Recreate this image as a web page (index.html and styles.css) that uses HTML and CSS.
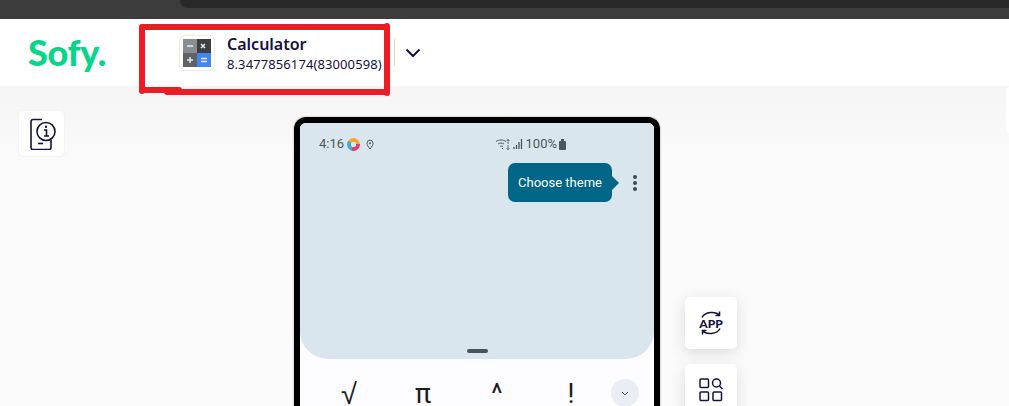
FILE: index.html
```html
<!DOCTYPE html>
<html lang="en">
<head>
  <meta charset="UTF-8">
  <title>Sofy</title>
  <link rel="stylesheet" href="styles.css">
</head>
<body>
  <div class="browser-strip">
    <div class="browser-tab"></div>
  </div>

  <header class="topbar">
    <div class="logo">Sofy.</div>
    <div class="app-picker">
      <div class="app-icon">
        <svg width="28" height="28" viewBox="0 0 28 28">
          <rect x="0" y="0" width="14" height="14" fill="#8a8d90"/>
          <rect x="14" y="0" width="14" height="14" fill="#3c4043"/>
          <rect x="0" y="14" width="14" height="14" fill="#5f6368"/>
          <rect x="14" y="14" width="14" height="14" fill="#4285f4"/>
          <path d="M4 7h6M18 5l4 4M22 5l-4 4M4 21h6M7 18v6M18 19.500h6M18 22.500h6" stroke="#e8eaed" stroke-width="1.500" fill="none"/>
        </svg>
      </div>
      <div class="app-text">
        <div class="app-name">Calculator</div>
        <div class="app-version">8.3477856174(83000598)</div>
      </div>
      <!-- red marker drawn over the screenshot -->
      <svg class="picker-outline" width="256" height="76" viewBox="0 0 256 76">
        <path d="M3 6V70M3 6H248M248 5V72M3 69H40M28 71H248" stroke="#ec1c24" stroke-width="6" stroke-linecap="round" fill="none"/>
      </svg>
    </div>
    <div class="divider"></div>
    <svg class="chevron" width="16" height="10" viewBox="0 0 16 10">
      <path d="M1.500 1.500L8 8l6.500-6.500" stroke="#14123f" stroke-width="2" fill="none"/>
    </svg>
  </header>

  <main class="stage">
    <aside class="left-rail">
      <button class="tool-btn">
        <svg width="28" height="32" viewBox="0 0 28 32">
          <path d="M14 1.500H5a2 2 0 0 0-2 2v26a2 2 0 0 0 2 2h16a2 2 0 0 0 2-2v-8" stroke="#14123f" stroke-width="1.600" fill="none"/>
          <path d="M10 25.500h5" stroke="#14123f" stroke-width="1.600"/>
          <circle cx="18" cy="13.500" r="9" stroke="#14123f" stroke-width="1.600" fill="#fff"/>
          <path d="M16 12h2.500v6M16 18h5" stroke="#14123f" stroke-width="1.600" fill="none"/>
          <circle cx="18" cy="8.700" r="1.200" fill="#14123f"/>
        </svg>
      </button>
    </aside>

    <div class="phone">
      <div class="phone-screen">
        <div class="panel">
          <div class="statusbar">
            <div class="status-left">
              <span>4:16</span>
              <span class="ring"></span>
              <svg class="pin" width="8" height="11" viewBox="0 0 8 11">
                <path d="M4 10C2 7.500 1 6 1 4.200a3 3 0 0 1 6 0C7 6 6 7.500 4 10z" stroke="#4d5560" fill="none"/>
                <circle cx="4" cy="4.200" r="1" fill="#4d5560"/>
              </svg>
            </div>
            <div class="status-right">
              <svg width="15" height="11" viewBox="0 0 15 11">
                <path d="M0 2.500c3-2 7-2 10 0M2 5c2-1.300 4-1.300 6 0M4 7.500c1-.6 2-.6 3 0M6 10l1-1" stroke="#4d5560" fill="none"/>
                <path d="M12 0v5M10.500 2L12 .5 13.500 2M12 6v5M10.500 9l1.500 1.500L13.500 9" stroke="#4d5560" stroke-width=".8" fill="none"/>
              </svg>
              <svg width="11" height="10" viewBox="0 0 11 10">
                <path d="M1 10V8M3.500 10V6M6 10V3M8.500 10V0" stroke="#4d5560" stroke-width="1.300"/>
              </svg>
              <span class="battery-text">100%</span>
              <span class="battery"></span>
            </div>
          </div>
          <div class="tooltip-row">
            <div class="tooltip">Choose theme</div>
            <div class="kebab"><i></i><i></i><i></i></div>
          </div>
          <div class="handle"></div>
        </div>
        <div class="keys">
          <span class="key key-root">√</span>
          <span class="key">π</span>
          <span class="key">^</span>
          <span class="key">!</span>
          <span class="more-key">
            <svg width="8" height="5" viewBox="0 0 8 5">
              <path d="M1 1l3 3 3-3" stroke="#4d5560" fill="none"/>
            </svg>
          </span>
        </div>
      </div>
    </div>

    <aside class="right-rail">
      <button class="tool-btn tool-btn-raised">
        <svg width="28" height="26" viewBox="0 0 28 26">
          <path d="M5 7.500C8 1.500 19 1 22.500 5.500M22.500 1.500v4h-4M23 18.500C20 24.500 9 25 5.500 20.500M5.500 24.500v-4h4" stroke="#14123f" stroke-width="1.500" fill="none"/>
          <text x="14" y="17.500" class="app-glyph" text-anchor="middle">APP</text>
        </svg>
      </button>
      <button class="tool-btn tool-btn-raised">
        <svg width="24" height="24" viewBox="0 0 24 24">
          <rect x="1" y="1" width="8.500" height="8.500" rx="1" stroke="#14123f" stroke-width="1.500" fill="none"/>
          <rect x="1" y="14" width="8.500" height="8.500" rx="1" stroke="#14123f" stroke-width="1.500" fill="none"/>
          <rect x="14" y="14" width="8.500" height="8.500" rx="1" stroke="#14123f" stroke-width="1.500" fill="none"/>
          <circle cx="17.500" cy="5" r="4" stroke="#14123f" stroke-width="1.500" fill="none"/>
          <path d="M20.500 8l3 3" stroke="#14123f" stroke-width="1.500"/>
        </svg>
      </button>
    </aside>

    <div class="edge-card"></div>
  </main>
</body>
</html>
```

FILE: styles.css
```css
html, body {
    margin: 0;
    height: 406px;
    overflow: hidden;
}
body {
    background-color: #fafafa;
    font-family: "Noto Sans", Arial, sans-serif;
    color: #14123f;
}
.browser-strip {
    height: 19px;
    background-color: #3c3c3c;
}
.browser-tab {
    height: 8px;
    margin-left: 180px;
    background-color: #282828;
    border-bottom-left-radius: 10px;
}
.topbar {
    height: 67px;
    background-color: white;
    display: flex;
    align-items: center;
    position: relative;
}
.logo {
    width: 141px;
    padding-left: 28px;
    box-sizing: border-box;
    font-family: Lato, sans-serif;
    font-weight: 900;
    font-size: 36px;
    letter-spacing: -0.300px;
    color: #06d68a;
    margin-top: -2px;
}
.app-picker {
    display: flex;
    align-items: center;
    padding-left: 38px;
    width: 253px;
    box-sizing: border-box;
    height: 67px;
    position: relative;
}
.picker-outline {
    position: absolute;
    left: -2px;
    top: 2px;
    z-index: 1;
}
.app-icon {
    width: 36px;
    height: 36px;
    box-sizing: border-box;
    border: 1px solid #efe9df;
    border-radius: 5px;
    display: flex;
    align-items: center;
    justify-content: center;
    margin-right: 12px;
    overflow: hidden;
}
.app-text {
    padding-top: 2px;
}
.app-name {
    font-size: 16px;
    font-weight: 600;
    line-height: 20px;
}
.app-version {
    font-size: 13px;
    line-height: 20px;
    letter-spacing: 0.100px;
    white-space: nowrap;
}
.divider {
    width: 1px;
    height: 27px;
    background-color: #d8d8d8;
}
.chevron {
    margin-left: 10px;
}
.stage {
    display: flex;
    position: relative;
    height: 320px;
    overflow: hidden;
    background: linear-gradient(#f5f5f5, #fafafa 70px);
}
.left-rail {
    width: 294px;
    padding: 24px 0 0 18px;
    box-sizing: border-box;
}
.tool-btn {
    width: 47px;
    height: 47px;
    padding: 0;
    border: 1px solid #f3f3f3;
    border-radius: 5px;
    background-color: white;
    display: flex;
    align-items: center;
    justify-content: center;
}
.tool-btn-raised {
    width: 52px;
    height: 52px;
    flex: none;
    border: 0;
    box-shadow: 0 4px 14px rgba(0, 0, 0, 0.12);
}
.phone {
    width: 366px;
    height: 340px;
    margin-top: 31px;
    box-sizing: border-box;
    border: 6px solid black;
    border-bottom: 0;
    border-radius: 12px 12px 0 0;
    background-color: #d9e6ee;
    box-shadow: 0 0 2px rgba(0, 0, 0, 0.4);
}
.phone-screen {
    height: 100%;
    background-color: #fdfcff;
    border-radius: 6px 6px 0 0;
    overflow: hidden;
}
.panel {
    height: 236px;
    background-color: #d9e6ee;
    border-radius: 0 0 28px 28px;
    position: relative;
}
.statusbar {
    display: flex;
    justify-content: space-between;
    padding: 12px 88px 0 19px;
    font-family: Roboto, sans-serif;
    font-size: 13px;
    line-height: 18px;
    color: #4d5560;
}
.status-left, .status-right {
    display: flex;
    align-items: center;
    gap: 2px;
}
.status-left {
    gap: 3px;
}
.pin {
    margin-left: 3px;
}
.ring {
    width: 13px;
    height: 13px;
    border-radius: 50%;
    background:
        radial-gradient(circle, #d9e6ee 0 2.500px, transparent 3px),
        conic-gradient(#f2a53a 0 25%, #e23b6e 25% 55%, #3fa9d8 55% 85%, #f2a53a 85%);
}
.battery {
    width: 7px;
    height: 9px;
    margin-top: 2px;
    background-color: #4d5560;
    border-radius: 1px;
    position: relative;
}
.battery::before {
    content: "";
    position: absolute;
    left: 2px;
    top: -2px;
    width: 3px;
    height: 2px;
    background-color: #4d5560;
}
.tooltip-row {
    display: flex;
    align-items: center;
    justify-content: flex-end;
    margin-top: 10px;
    padding-right: 17px;
}
.tooltip {
    height: 39px;
    width: 104px;
    line-height: 39px;
    text-align: center;
    background-color: #006687;
    color: white;
    font-family: Roboto, sans-serif;
    font-size: 13px;
    border-radius: 7px;
    position: relative;
}
.tooltip::after {
    content: "";
    position: absolute;
    right: -7px;
    top: 13px;
    border-top: 7px solid transparent;
    border-bottom: 7px solid transparent;
    border-left: 7px solid #006687;
}
.kebab {
    margin-left: 21px;
    display: flex;
    flex-direction: column;
    gap: 2px;
}
.kebab i {
    display: block;
    width: 4px;
    height: 4px;
    border-radius: 50%;
    background-color: #404850;
}
.handle {
    position: absolute;
    left: 167px;
    bottom: 6px;
    width: 21px;
    height: 4px;
    border-radius: 2px;
    background-color: #49535c;
}
.keys {
    display: flex;
    align-items: center;
    padding: 19px 0 0 12px;
    font-family: Roboto, sans-serif;
    font-size: 27px;
    color: #1a1c1e;
}
.key {
    width: 74px;
    text-align: center;
    line-height: 28px;
    padding-top: 2px;
}
.key-root {
    font-family: "Liberation Sans", sans-serif;
    font-size: 29px;
}
.more-key {
    width: 28px;
    height: 28px;
    margin-left: 3px;
    border-radius: 50%;
    background-color: #e8eef3;
    display: flex;
    align-items: center;
    justify-content: center;
}
.right-rail {
    display: flex;
    flex-direction: column;
    gap: 15px;
    padding: 211px 0 0 25px;
}
.app-glyph {
    font-family: Lato, sans-serif;
    font-weight: 900;
    font-size: 12px;
    fill: #14123f;
}
.edge-card {
    position: absolute;
    right: 0;
    top: 1px;
    width: 3px;
    height: 46px;
    background-color: white;
    border-radius: 3px 0 0 3px;
}
```
